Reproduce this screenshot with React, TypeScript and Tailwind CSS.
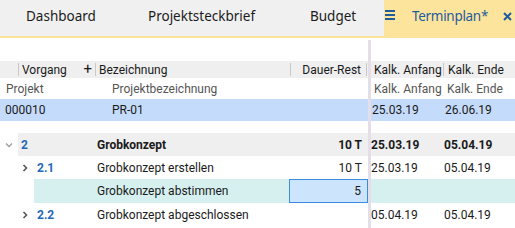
import React from 'react';

const grid = { fontFamily: 'Roboto, "Liberation Sans", sans-serif' };
const tabFont = { fontFamily: '"Noto Sans", "Open Sans", sans-serif' };

const Chevron = ({ down = false, className = '' }: { down?: boolean; className?: string }) => (
  <svg width="8" height="8" viewBox="0 0 8 8" className={className}>
    {down ? (
      <path d="M1 2.5 L4 5.5 L7 2.5" fill="none" stroke="currentColor" strokeWidth="1.4" />
    ) : (
      <path d="M2.5 1 L5.5 4 L2.5 7" fill="none" stroke="currentColor" strokeWidth="1.6" />
    )}
  </svg>
);

const TabBar = () => (
  <div className="flex h-[38px] bg-[#f0f0f0] border-b-2 border-[#fde39a] text-[13.5px] text-[#1b1b1b]" style={tabFont}>
    <div className="w-[148px] pl-[26px] pt-[6px]">Dashboard</div>
    <div className="w-[162px] pt-[6px]">Projektsteckbrief</div>
    <div className="w-[74px] pt-[6px]">Budget</div>
    <div className="flex-1 flex items-start bg-[#fde49c] text-[#1e5c9e] pt-[6px]">
      <div className="flex flex-col gap-[2px] ml-[1px] mt-[4px] mr-[17px]">
        <span className="block w-[10px] h-[2px] bg-[#1e5c9e]" />
        <span className="block w-[10px] h-[2px] bg-[#1e5c9e]" />
        <span className="block w-[10px] h-[2px] bg-[#1e5c9e]" />
      </div>
      <span className="tracking-[-0.3px]">Terminplan*</span>
      <svg width="9" height="9" viewBox="0 0 9 9" className="ml-[15px] mt-[6px]">
        <path d="M1 1 L8 8 M8 1 L1 8" stroke="#1e5c9e" strokeWidth="2" />
      </svg>
    </div>
  </div>
);

const Divider = () => <span className="block w-px h-[13px] bg-[#c8c8c8]" />;

const LeftPanel = () => (
  <div className="w-[368px] text-[12px] text-[#1a1a1a]" style={grid}>
    <div className="h-[23px]" />
    <div className="flex items-center h-[17px] bg-[#efefef]">
      <div className="w-[18px]" />
      <Divider />
      <div className="w-[76px] flex items-center pl-[3px] pr-[3px]">
        <span>Vorgang</span>
        <span className="ml-auto text-[15px] leading-none">+</span>
      </div>
      <Divider />
      <div className="w-[194px] pl-[3px]">Bezeichnung</div>
      <Divider />
      <div className="w-[75px] text-right pr-[5px]">Dauer-Rest</div>
      <Divider />
    </div>
    <div className="flex items-center h-[21px] text-[#555]">
      <div className="w-[112px] pl-[6px]">Projekt</div>
      <div>Projektbezeichnung</div>
    </div>
    <div className="flex items-center h-[22px] bg-[#c5dbfb]">
      <div className="w-[112px] pl-[5px]">000010</div>
      <div>PR-01</div>
    </div>
    <div className="h-[12px]" />
    <div className="flex items-center h-[23px] font-bold">
      <div className="w-[18px] flex justify-center text-[#a0a0a0]">
        <Chevron down />
      </div>
      <div className="flex-1 flex items-center h-full bg-[#efefef]">
        <div className="w-[79px] pl-[3px] text-[#1f68b8]">2</div>
        <div className="flex-1">Grobkonzept</div>
        <div className="w-[76px] text-right pr-[6px]">10 T</div>
      </div>
    </div>
    <div className="flex items-center h-[23px]">
      <div className="w-[34px] flex justify-end pr-[5px] text-[#555]">
        <Chevron />
      </div>
      <div className="w-[63px] pl-[3px] font-bold text-[#1f68b8]">2.1</div>
      <div className="flex-1">Grobkonzept erstellen</div>
      <div className="w-[76px] text-right pr-[6px]">10 T</div>
    </div>
    <div className="flex items-center h-[24px]">
      <div className="w-[34px]" />
      <div className="flex-1 flex items-center h-full bg-[#d6f0f0]">
        <div className="w-[63px]" />
        <div className="flex-1">Grobkonzept abstimmen</div>
        <div className="w-[79px] h-full border border-[#3a8ee2] bg-[#cce4fc] flex items-center justify-end pr-[6px]">
          5
        </div>
      </div>
    </div>
    <div className="flex items-center h-[23px]">
      <div className="w-[34px] flex justify-end pr-[5px] text-[#555]">
        <Chevron />
      </div>
      <div className="w-[63px] pl-[3px] font-bold text-[#1f68b8]">2.2</div>
      <div className="flex-1">Grobkonzept abgeschlossen</div>
      <div className="w-[76px]" />
    </div>
  </div>
);

const RightPanel = () => (
  <div className="flex-1 text-[12px] text-[#1a1a1a]" style={grid}>
    <div className="h-[23px]" />
    <div className="flex items-center h-[17px] bg-[#efefef]">
      <div className="w-[72px] pl-[3px]">Kalk. Anfang</div>
      <Divider />
      <div className="pl-[4px]">Kalk. Ende</div>
    </div>
    <div className="flex items-center h-[21px] text-[#555]">
      <div className="w-[73px] pl-[3px]">Kalk. Anfang</div>
      <div className="pl-[3px]">Kalk. Ende</div>
    </div>
    <div className="flex items-center h-[22px] bg-[#c5dbfb]">
      <div className="w-[73px] pl-[1px]">25.03.19</div>
      <div className="pl-[1px]">26.06.19</div>
    </div>
    <div className="h-[12px]" />
    <div className="flex items-center h-[23px] bg-[#efefef] font-bold">
      <div className="w-[73px]">25.03.19</div>
      <div>05.04.19</div>
    </div>
    <div className="flex items-center h-[23px]">
      <div className="w-[73px]">25.03.19</div>
      <div>05.04.19</div>
    </div>
    <div className="h-[24px] bg-[#d6f0f0]" />
    <div className="flex items-center h-[23px]">
      <div className="w-[73px]">05.04.19</div>
      <div>05.04.19</div>
    </div>
  </div>
);

export default function App() {
  return (
    <div className="w-[515px] h-[228px] overflow-hidden bg-white">
      <TabBar />
      <div className="flex">
        <LeftPanel />
        <div className="w-[3px] mt-[2px] h-[190px] bg-[#e3dee8]" />
        <RightPanel />
      </div>
    </div>
  );
}
